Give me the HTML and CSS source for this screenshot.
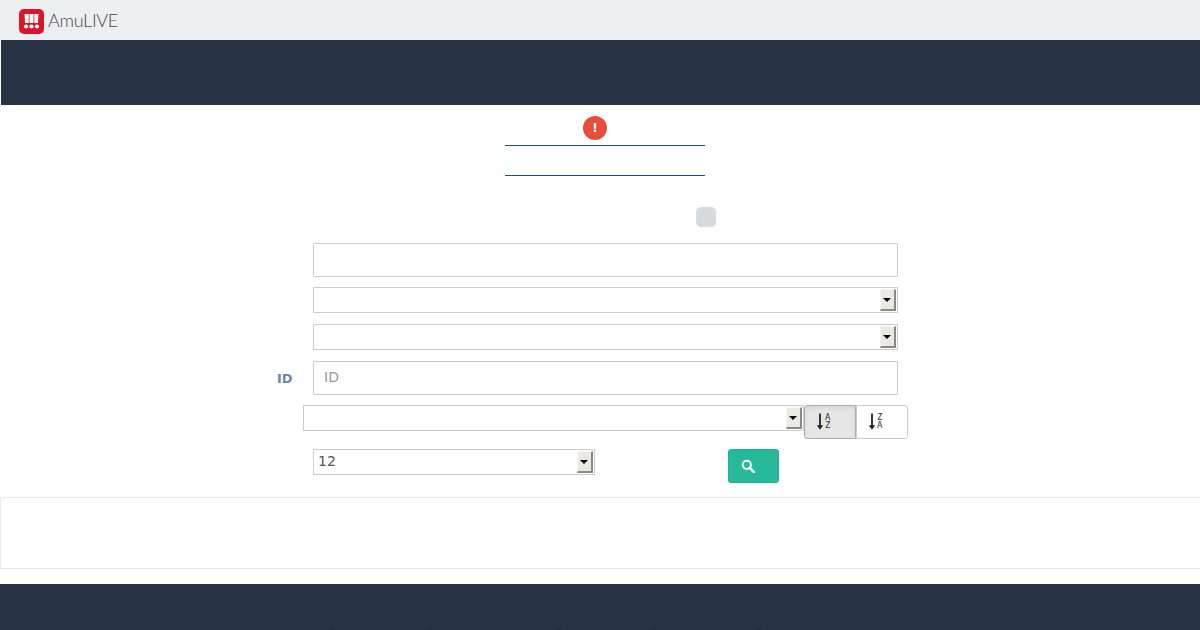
FILE: index.html
```html
<!DOCTYPE html>
<html lang="en">
<head>
<meta charset="utf-8">
<title>AmuLIVE</title>
<link rel="stylesheet" href="styles.css">
</head>
<body>
<header class="topbar">
  <svg class="logo-icon" width="25" height="25" viewBox="0 0 25 25" aria-hidden="true">
    <rect width="25" height="25" rx="5" fill="#dc1429"/>
    <path fill="#fff" d="M5.500 5h4.200v9H6zM10.500 5h4v9h-4zM15.300 5h4.200l-.5 9h-3.700z"/>
    <circle cx="7" cy="17.500" r="2.100" fill="#fff"/>
    <circle cx="12.500" cy="17.500" r="2.100" fill="#fff"/>
    <circle cx="18" cy="17.500" r="2.100" fill="#fff"/>
  </svg>
  <span class="logo-text">AmuLIVE</span>
</header>
<div class="band"></div>
<main class="content">
  <div class="alert-icon">!</div>
  <div class="rule-box"></div>
  <div class="toggle"></div>
  <form class="form">
    <div class="row"><input class="field" type="text"></div>
    <div class="row"><div class="select-wrap"><select class="select"><option></option></select><span class="arrow"></span></div></div>
    <div class="row"><div class="select-wrap"><select class="select"><option></option></select><span class="arrow"></span></div></div>
    <div class="row"><label class="label">ID</label><input class="field" type="text" placeholder="ID"></div>
    <div class="row row-sort">
      <div class="select-wrap sort-select"><select class="select"><option></option></select><span class="arrow"></span></div>
      <button class="sort active" type="button">
        <svg width="8" height="18" viewBox="0 0 8 18" aria-hidden="true"><path d="M4 .5v13" stroke="#222" stroke-width="1.800" fill="none"/><path d="M.8 12.300h6.400L4 16.800z" fill="#222"/></svg><span class="letters">A<br>Z</span>
      </button>
      <button class="sort" type="button">
        <svg width="8" height="18" viewBox="0 0 8 18" aria-hidden="true"><path d="M4 .5v13" stroke="#222" stroke-width="1.800" fill="none"/><path d="M.8 12.300h6.400L4 16.800z" fill="#222"/></svg><span class="letters">Z<br>A</span>
      </button>
    </div>
    <div class="row row-last">
      <div class="select-wrap page-select"><select class="select select-value"><option>12</option></select><span class="arrow"></span></div>
      <button class="search" type="button" aria-label="Search">
        <svg width="14" height="14" viewBox="0 0 14 14" aria-hidden="true"><circle cx="5.800" cy="5.800" r="4.100" fill="none" stroke="#fff" stroke-width="2"/><path d="M8.800 8.800 12.800 12.800" stroke="#fff" stroke-width="2.400" stroke-linecap="round"/></svg>
      </button>
    </div>
  </form>
</main>
<section class="panel"></section>
<footer class="footer">
  <span class="mark"></span><span class="mark"></span><span class="mark"></span><span class="mark"></span><span class="mark"></span>
</footer>
</body>
</html>
```
FILE: styles.css
```css
html, body { margin: 0; padding: 0; }
body {
  width: 1200px;
  height: 630px;
  overflow: hidden;
  background: #fff;
  font-family: "DejaVu Sans", sans-serif;
  color: #444;
}
.topbar {
  height: 40px;
  background: #edeef0;
  display: flex;
  align-items: center;
  padding-left: 19px;
  box-sizing: border-box;
}
.logo-icon { flex: none; margin-top: 2px; }
.logo-text {
  margin-left: 4px;
  font: 300 18px/26px Lato, sans-serif;
  color: #44484c;
  letter-spacing: -0.3px;
}
.band {
  height: 65px;
  margin-left: 1px;
  background: #283446;
}
.content {
  height: 392px;
  display: flex;
  flex-direction: column;
  align-items: center;
  box-sizing: border-box;
  padding-top: 11px;
}
.alert-icon {
  width: 24px;
  height: 24px;
  border-radius: 50%;
  background: #e74c3c;
  color: #fff;
  font: 700 12px/24px "DejaVu Sans", sans-serif;
  text-align: center;
  margin-right: 10px;
}
.rule-box {
  width: 200px;
  height: 29px;
  margin-top: 5px;
  margin-left: 10px;
  border-top: 1px solid #24497c;
  border-bottom: 1px solid #24497c;
  background: #feffff;
}
.toggle {
  width: 20px;
  height: 20px;
  margin-top: 31px;
  margin-left: 212px;
  border-radius: 5px;
  background: #d5dbdf;
}
.form {
  width: 605px;
  align-self: flex-start;
  margin: 16px 0 0 303px;
  display: flex;
  flex-direction: column;
  gap: 10px;
  position: relative;
}
.row {
  display: flex;
  justify-content: flex-end;
  padding-right: 10px;
  position: relative;
}
.row + .row + .row { margin-top: 1px; }
.row-sort { padding-right: 0; margin-top: 0 !important; }
.row-last {
  justify-content: flex-start;
  padding-left: 10px;
  padding-right: 0;
  margin-top: 0 !important;
}
.field {
  width: 585px;
  height: 34px;
  box-sizing: border-box;
  border: 1px solid #ccc;
  border-radius: 1px;
  background: #fff;
  padding: 0 10px 2px;
  font: 14px "DejaVu Sans", sans-serif;
  color: #444;
}
.field::placeholder { color: #999; opacity: 1; }
.label {
  position: absolute;
  left: -26px;
  top: 10px;
  font: 700 13px/16px "DejaVu Sans", sans-serif;
  color: #6f87a0;
}
.select-wrap {
  position: relative;
  width: 585px;
  height: 26px;
}
.select {
  appearance: none;
  display: block;
  width: 100%;
  height: 100%;
  box-sizing: border-box;
  border: 1px solid #ccc;
  border-radius: 0;
  background: #fff;
  padding: 0 4px 2px;
  font: 14px "DejaVu Sans", sans-serif;
  color: #555;
}
.arrow {
  position: absolute;
  right: 2px;
  top: 2px;
  width: 16px;
  height: 22px;
  box-sizing: border-box;
  background: #ebe9e3;
  border-top: 1px solid #f6f5f1;
  border-left: 1px solid #f6f5f1;
  border-right: 2px solid #8b8983;
  border-bottom: 2px solid #8b8983;
}
.arrow::after {
  content: "";
  position: absolute;
  left: 2px;
  top: 8px;
  border-left: 4px solid transparent;
  border-right: 4px solid transparent;
  border-top: 4px solid #000;
}
.sort-select { width: 501px; }
.sort {
  width: 52px;
  height: 34px;
  box-sizing: border-box;
  border: 1px solid #ccc;
  background: #fff;
  padding: 0 0 0 11px;
  display: flex;
  align-items: center;
  border-radius: 0 3px 3px 0;
  color: #222;
}
.sort.active {
  background: #e6e6e6;
  border-color: #adadad;
  border-radius: 3px 0 0 3px;
  box-shadow: inset 0 2px 4px rgba(0,0,0,.08);
}
.sort svg { flex: none; }
.letters {
  font: 400 9px/8px "DejaVu Sans Mono", monospace;
  margin-left: 1px;
  margin-top: -3px;
  color: #333;
}
.page-select { width: 282px; height: 26px; }
.search {
  margin-left: 133px;
  width: 51px;
  height: 34px;
  box-sizing: border-box;
  border: 1px solid #1fae90;
  border-radius: 3px;
  background: #26b99a;
  padding: 0 0 0 12px;
  display: flex;
  align-items: center;
}
.panel {
  height: 72px;
  box-sizing: border-box;
  border: 1px solid #e6e9ed;
  border-right: 0;
}
.footer {
  margin-top: 15px;
  height: 46px;
  background: #283446;
  display: flex;
  align-items: flex-end;
  padding-left: 329px;
}
.mark {
  width: 6px;
  height: 2px;
  background: #232e3e;
}
.mark:nth-child(2) { margin-left: 91px; }
.mark:nth-child(3) { margin-left: 123px; }
.mark:nth-child(4) { margin-left: 89px; }
.mark:nth-child(5) { margin-left: 99px; }
```
